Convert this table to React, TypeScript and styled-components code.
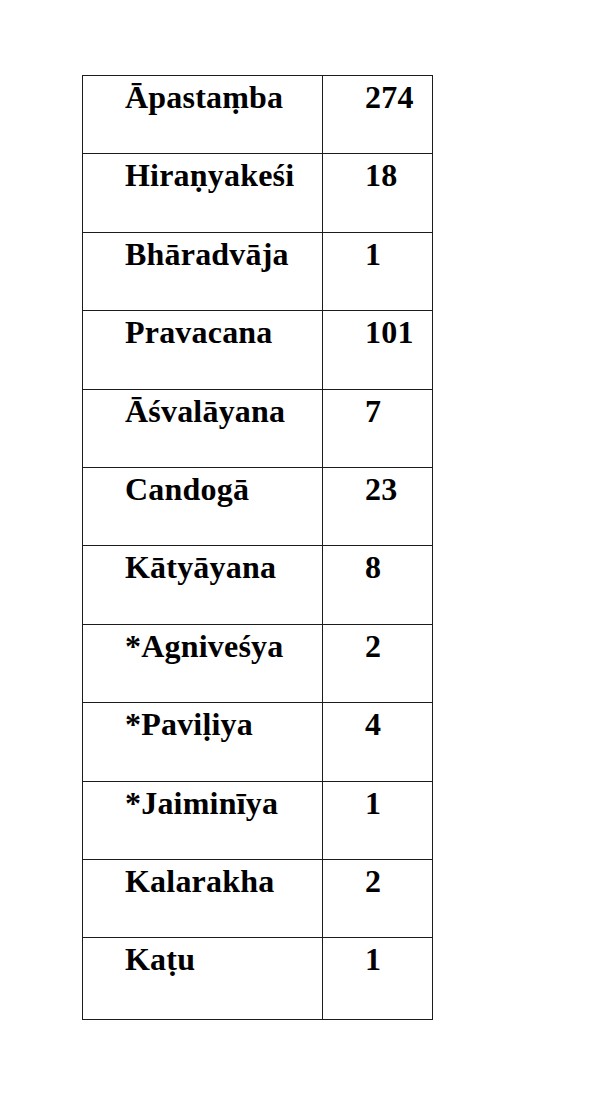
import styled, { createGlobalStyle } from 'styled-components'

const GlobalStyle = createGlobalStyle`
  html, body {
    margin: 0;
    padding: 0;
    background: #ffffff;
  }
`

const Page = styled.div`
  padding: 75px 0 0 82px;
`

const Table = styled.table`
  border-collapse: collapse;
  width: 351px;
  font-family: 'Liberation Serif', 'Times New Roman', serif;
  font-weight: bold;
  font-size: 32px;
  letter-spacing: 0.2px;
  color: #000;
`

const Row = styled.tr<{ $tall?: boolean }>`
  height: ${({ $tall }) => ($tall ? '82px' : '78.4px')};
`

const Cell = styled.td<{ $num?: boolean }>`
  border: 1px solid #1c1c1c;
  vertical-align: top;
  padding: 5px 0 0 42px;
  line-height: 33px;
  white-space: nowrap;
  width: ${({ $num }) => ($num ? '110px' : '240px')};
  box-sizing: border-box;
`

const rows: [string, string][] = [
  ['Āpastaṃba', '274'],
  ['Hiraṇyakeśi', '18'],
  ['Bhāradvāja', '1'],
  ['Pravacana', '101'],
  ['Āśvalāyana', '7'],
  ['Candogā', '23'],
  ['Kātyāyana', '8'],
  ['*Agniveśya', '2'],
  ['*Paviḷiya', '4'],
  ['*Jaiminīya', '1'],
  ['Kalarakha', '2'],
  ['Kaṭu', '1'],
]

export default function App() {
  return (
    <>
      <GlobalStyle />
      <Page>
        <Table>
          <tbody>
            {rows.map(([name, count], i) => (
              <Row key={name} $tall={i === rows.length - 1}>
                <Cell>{name}</Cell>
                <Cell $num>{count}</Cell>
              </Row>
            ))}
          </tbody>
        </Table>
      </Page>
    </>
  )
}
